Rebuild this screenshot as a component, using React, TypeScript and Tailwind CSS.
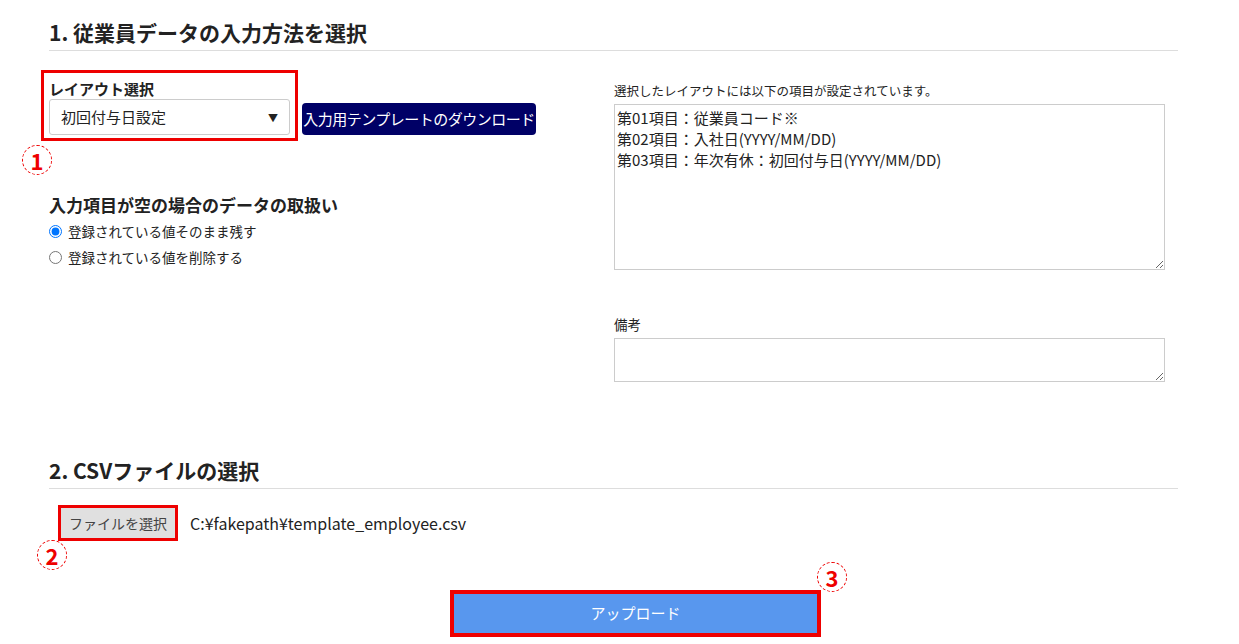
export default function App() {
  const f = { fontFamily: '"Noto Sans CJK JP","Liberation Sans",sans-serif' };
  const circ = "absolute w-[30px] h-[30px] rounded-full border border-dashed border-[#e00] text-[#e00] font-bold text-[22px] leading-none flex items-center justify-center bg-white";
  return (
    <div className="relative w-[1239px] h-[644px] bg-white text-[#222] overflow-hidden" style={f}>
      <div className="pl-[49px] pr-[61px] pt-[16px]">
        <h2 className="text-[21px] font-bold leading-[32px] pb-[2px] border-b border-[#ddd]">1. 従業員データの入力方法を選択</h2>
        <div className="flex mt-[19px]">
          <div className="w-[565px]">
            <div className="flex items-end">
              <div className="-ml-[8px] border-[3px] border-[#e00] px-[5px] pt-[6px] pb-[3px] w-[257px]">
                <div className="text-[15px] font-bold leading-[20px]">レイアウト選択</div>
                <div className="h-[36px] border border-[#ccc] rounded-[3px] flex items-center justify-between px-[11px] text-[15px]">
                  <span>初回付与日設定</span><span className="text-[10px]">▼</span>
                </div>
              </div>
              <div className="ml-[4px] mb-[6px] h-[32px] w-[234px] bg-[#000066] text-white text-[15px] rounded-[4px] flex items-center justify-center tracking-[-0.5px]">入力用テンプレートのダウンロード</div>
            </div>
            <div className="mt-[53px] text-[17px] font-bold leading-[22px]">入力項目が空の場合のデータの取扱い</div>
            <label className="flex items-center gap-[6px] text-[13.5px] mt-[4px] leading-[22px]"><input type="radio" defaultChecked className="w-[13px] h-[13px]" />登録されている値そのまま残す</label>
            <label className="flex items-center gap-[6px] text-[13.5px] mt-[4px] leading-[22px]"><input type="radio" className="w-[13px] h-[13px]" />登録されている値を削除する</label>
          </div>
          <div className="w-[551px]">
            <div className="text-[12.5px] leading-[18px] mt-[12px]">選択したレイアウトには以下の項目が設定されています。</div>
            <textarea readOnly className="block w-[551px] h-[166px] mt-[4px] border border-[#ccc] text-[15px] leading-[21px] px-[2px] py-[2px] resize-y" defaultValue={"第01項目：従業員コード※\n第02項目：入社日(YYYY/MM/DD)\n第03項目：年次有休：初回付与日(YYYY/MM/DD)"} />
            <div className="text-[13.5px] mt-[44px] leading-[20px]">備考</div>
            <textarea className="block w-[551px] h-[44px] mt-[4px] border border-[#ccc]" />
          </div>
        </div>
        <h2 className="mt-[72px] text-[21px] font-bold leading-[32px] pb-[2px] border-b border-[#ddd]">2. CSVファイルの選択</h2>
        <div className="flex items-center mt-[16px] ml-[9px]">
          <div className="border-[3px] border-[#e00] w-[120px] h-[36px] bg-[#e0e0e0] text-[14px] text-[#444] flex items-center justify-center">ファイルを選択</div>
          <span className="ml-[12px] text-[16px]">C:¥fakepath¥template_employee.csv</span>
        </div>
        <div className="mt-[49px] ml-[401px] w-[371px] h-[47px] border-[4px] border-[#e00] bg-[#5897ee] text-white text-[15px] flex items-center justify-center">アップロード</div>
      </div>
      <div className={circ + " left-[22px] top-[145px]"}>1</div>
      <div className={circ + " left-[37px] top-[540px]"}>2</div>
      <div className={circ + " left-[817px] top-[562px]"}>3</div>
    </div>
  );
}
